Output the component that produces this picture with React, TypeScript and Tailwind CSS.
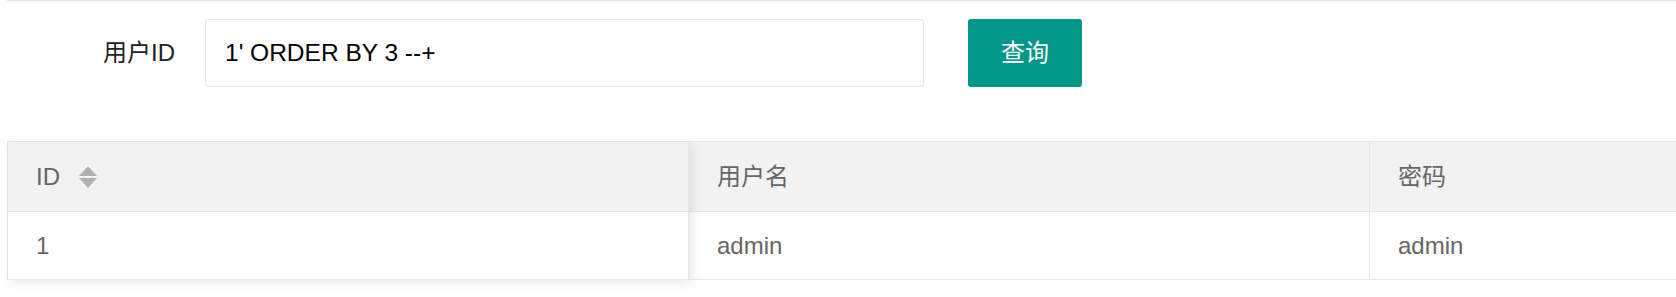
import React from 'react'

const font = { fontFamily: '"Liberation Sans", "Noto Sans CJK SC", Arial, sans-serif' }

function SortIcon() {
  return (
    <svg width="18" height="22" viewBox="0 0 18 22" className="ml-[19px] shrink-0">
      <polygon points="9,0 18,10 0,10" fill="#b2b2b2" />
      <polygon points="0,12 18,12 9,22" fill="#b2b2b2" />
    </svg>
  )
}

const columns = [
  { key: 'id', title: 'ID', sort: true, value: '1' },
  { key: 'username', title: '用户名', sort: false, value: 'admin' },
  { key: 'password', title: '密码', sort: false, value: 'admin' },
]

export default function App() {
  return (
    <div className="w-[1676px] h-[297px] overflow-hidden bg-white text-[24px]" style={font}>
      {/* top rule */}
      <div className="ml-[7px] border-t border-[#e2e2e2]" />

      {/* search form */}
      <div className="mt-[18px] flex items-center">
        <label className="w-[175px] shrink-0 text-right text-[#222] leading-none">用户ID</label>
        <input
          defaultValue="1' ORDER BY 3 --+"
          className="ml-[30px] w-[719px] h-[68px] shrink-0 border border-[#e6e6e6] rounded-[3px] px-[19px] text-[24.5px] text-black outline-none"
          style={font}
        />
        <button className="ml-[44px] w-[114px] h-[68px] shrink-0 bg-[#009688] text-white rounded-[3px] text-[24px]">
          查询
        </button>
      </div>

      {/* table */}
      <div className="ml-[7px] mt-[54px] flex w-[2044px] border-t border-l border-[#e6e6e6] text-[#666]">
        {columns.map((col, i) => (
          <div
            key={col.key}
            className={
              i === 0
                ? 'relative z-10 w-[681px] shrink-0 bg-white shadow-[3px_3px_10px_rgba(0,0,0,0.09)]'
                : 'w-[681px] shrink-0 bg-white'
            }
          >
            <div className="h-[70px] bg-[#f2f2f2] border-b border-r border-[#e6e6e6] flex items-center px-[28px]">
              <span>{col.title}</span>
              {col.sort && <SortIcon />}
            </div>
            <div className="h-[68px] border-b border-r border-[#e6e6e6] flex items-center px-[28px]">
              {col.value}
            </div>
          </div>
        ))}
      </div>
    </div>
  )
}
